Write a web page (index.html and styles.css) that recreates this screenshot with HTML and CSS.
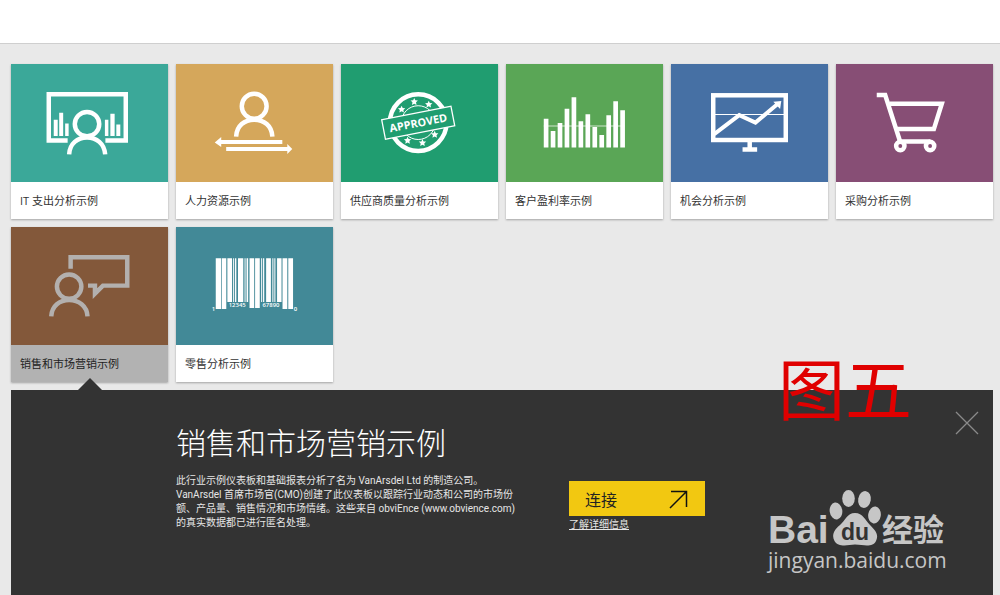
FILE: index.html
```
<!DOCTYPE html>
<html lang="zh-CN">
<head>
    <meta charset="UTF-8">
    <meta name="viewport" content="width=device-width, initial-scale=1.0">
    <title>示例</title>
    <link rel="stylesheet" href="styles.css">
</head>
<body>
    <header class="topbar"></header>
    <main class="content">
        <div class="tiles">
            <button type="button" class="tile">
                <svg class="tile-icon teal" viewBox="0 0 158 119" fill="none" stroke="#fff" stroke-width="4.5">
                    <path d="M57 77H38V30.5H115.500V77H95"/>
                    <g fill="#fff" stroke="none">
                        <path d="M43 56h4v16.500h-4zM48.500 49h4v23.500h-4zM54.500 60h3.500v12.500h-3.500zM94.500 56h3.500v16.500h-3.500zM100 50h4.300v22.500h-4.300zM106 61h4v11.500h-4z"/>
                    </g>
                    <circle cx="76.500" cy="60.500" r="15" stroke="#3ba899" stroke-width="4"/>
                    <circle cx="76.500" cy="60.500" r="12.300"/>
                    <path d="M58.500 91C59 80 67 74 76.500 74S94 80 94.800 91"/>
                </svg>
                <span class="tile-label">IT 支出分析示例</span>
            </button>
            <button type="button" class="tile">
                <svg class="tile-icon gold" viewBox="0 0 158 119" fill="none" stroke="#fff" stroke-width="4.5">
                    <circle cx="78.700" cy="42.500" r="12.500"/>
                    <path d="M60.500 73C61 62 69 56 78.700 56S96.500 62 97 73"/>
                    <g fill="#fff" stroke="none">
                        <path d="M39 79l6.500-5.500v3h61.500v4H45.500v3zM117 85.500l-5-5v3H50.500v4H112v3z"/>
                    </g>
                </svg>
                <span class="tile-label">人力资源示例</span>
            </button>
            <button type="button" class="tile">
                <svg class="tile-icon green" viewBox="0 0 158 119" fill="none" stroke="#fff">
                    <defs>
                        <path id="star" d="M0-3.800L1.100-1.400L3.700-1.200L1.800.6L2.300 3.200L0 1.900L-2.300 3.200L-1.800.6L-3.700-1.200L-1.100-1.400Z"/>
                    </defs>
                    <circle cx="77.700" cy="59" r="28.500" stroke-width="4.500"/>
                    <circle cx="77.700" cy="59" r="17"/>
                    <g fill="#fff" stroke="none">
                        <use href="#star" x="73.700" y="38"/>
                        <use href="#star" x="88.300" y="40.700"/>
                        <use href="#star" x="61" y="45.700"/>
                        <use href="#star" x="67" y="77"/>
                        <use href="#star" x="82" y="79.300"/>
                        <use href="#star" x="94.300" y="71"/>
                    </g>
                    <g transform="translate(77.700 59.200) rotate(-11)">
                        <rect x="-35.500" y="-10" width="71" height="20" fill="#209d70" stroke-width="1.300"/>
                        <text class="stamp" x="0" y="4" fill="#fff" stroke="none" text-anchor="middle">APPROVED</text>
                    </g>
                </svg>
                <span class="tile-label">供应商质量分析示例</span>
            </button>
            <button type="button" class="tile">
                <svg class="tile-icon lime" viewBox="0 0 158 119" fill="#fff">
                    <path d="M38 55h4.700v29H38zM45 67.500h4.700V84H45zM52 59.500h4.700V84H52zM59 45h4.700v39H59zM66 33.500h4.700V84H66zM73 57.500h4.700V84H73zM80 50.500h4.700V84H80zM87 63.500h4.700V84H87zM94 71.500h4.700V84H94zM101 51.500h4.700V84H101zM108 37.500h4.700V84H108zM115 46.500h4.700V84H115z"/>
                    <path d="M38 61.800h81.500v1.200H38z" fill-opacity="0.7"/>
                </svg>
                <span class="tile-label">客户盈利率示例</span>
            </button>
            <button type="button" class="tile">
                <svg class="tile-icon blue" viewBox="0 0 158 119" fill="none" stroke="#fff" stroke-width="4.5">
                    <rect x="42.500" y="31.500" width="73" height="45"/>
                    <path d="M44 50.800h72" stroke-width="1.200"/>
                    <path d="M43.500 70.500L68.700 51.500L85 59L107 40.500" stroke-width="4"/>
                    <path d="M103 38l8-.8l-1.200 8z" fill="#fff" stroke="none"/>
                    <path d="M79.200 78v7M72 86h14.700"/>
                </svg>
                <span class="tile-label">机会分析示例</span>
            </button>
            <button type="button" class="tile">
                <svg class="tile-icon purple" viewBox="0 0 158 119" fill="none" stroke="#fff" stroke-width="4.5">
                    <path d="M41 31.200h8.500L64.500 78H95"/>
                    <path d="M54 40H106.500L98.500 65.500H61"/>
                    <circle cx="64.700" cy="82.500" r="4.200" fill="#874e75"/>
                    <circle cx="94.700" cy="82.500" r="4.200" fill="#874e75"/>
                </svg>
                <span class="tile-label">采购分析示例</span>
            </button>
            <button type="button" class="tile selected">
                <svg class="tile-icon brown" viewBox="0 0 158 119" fill="none" stroke="#b3b0ae" stroke-width="4.5">
                    <circle cx="58.500" cy="60" r="12.300"/>
                    <path d="M40.500 90C41 79.500 49 73.500 58.500 73.500S76.500 79.500 77 90"/>
                    <path d="M60 42V30.500H117V59H92.500L84.500 67V59H77.500"/>
                </svg>
                <span class="tile-label">销售和市场营销示例</span>
            </button>
            <button type="button" class="tile">
                <svg class="tile-icon cyan" viewBox="0 0 158 119" fill="#fff">
                    <path d="M40 31.500h5.300v51H40zM46 31.500h4.600v51H46zM51.700 31.500h4.700V75.500h-4.700zM57.500 31.500h1v44h-1zM59.400 31.500h1.300v44h-1.300zM62.400 31.500h5.300v44h-5.300zM69 31.500h1v44h-1zM71 31.500h1.600v44H71zM74 31.500h4.700v50H74zM79.600 31.500h4.700v50h-4.700zM85.700 31.500h1v44h-1zM87.600 31.500h1.200v44h-1.200zM90.700 31.500h4.800v44h-4.800zM97 31.500h1v44h-1zM99 31.500h1v44h-1zM101.700 31.500h4.500v44h-4.500zM107.200 31.500h4.800v51h-4.800zM113 31.500h4.800v51H113z"/>
                    <g class="digits">
                        <text x="36" y="84.500">1</text>
                        <text x="53" y="81">12345</text>
                        <text x="87" y="81">67890</text>
                        <text x="118.500" y="84.500">0</text>
                    </g>
                </svg>
                <span class="tile-label">零售分析示例</span>
            </button>
        </div>

        <section class="detail">
            <div class="detail-text">
                <h2>销售和市场营销示例</h2>
                <p>此行业示例仪表板和基础报表分析了名为 VanArsdel Ltd 的制造公司。<br>VanArsdel 首席市场官(CMO)创建了此仪表板以跟踪行业动态和公司的市场份<br>额、产品量、销售情况和市场情绪。这些来自 obviEnce (www.obvience.com)<br>的真实数据都已进行匿名处理。</p>
            </div>
            <div class="detail-actions">
                <button type="button" class="connect">
                    连接
                    <svg width="20" height="20" viewBox="0 0 20 20" fill="none" stroke="#111" stroke-width="1.5">
                        <path d="M2 2.500H17.500V18M17.500 2.500L1 19"/>
                    </svg>
                </button>
                <a href="#" class="more">了解详细信息</a>
            </div>
            <button type="button" class="close" aria-label="关闭">
                <svg width="24" height="24" viewBox="0 0 24 24" stroke="#8a8a8a" stroke-width="1.300">
                    <path d="M1 1L23 23M23 1L1 23"/>
                </svg>
            </button>
        </section>
    </main>

    <div class="figure-mark">图五</div>
    <svg class="watermark" width="184" height="92" viewBox="0 0 184 92" fill="#c6c6c6">
        <text class="wm-bai" x="2" y="57">Bai</text>
        <ellipse cx="70" cy="25" rx="6.300" ry="8.500" transform="rotate(-8 70 25)"/>
        <ellipse cx="82.500" cy="12.500" rx="6.300" ry="8.500"/>
        <ellipse cx="98.500" cy="13.500" rx="6.300" ry="8.500" transform="rotate(10 98.500 13.500)"/>
        <ellipse cx="108.500" cy="29" rx="6.300" ry="8.500" transform="rotate(8 108.500 29)"/>
        <path d="M89 27C97 27 99 34 104 39C110 45 113 49 110 55C107 61 100 59.500 89 58.500C80 59.500 72 61 68.500 55C65 48 69 43 74 39C79 35 81 27 89 27Z"/>
        <text class="wm-du" x="75" y="54" fill="#333">du</text>
        <text class="wm-cn" x="116" y="55">经验</text>
        <text class="wm-url" x="2" y="82">jingyan.baidu.com</text>
    </svg>
</body>
</html>
```
FILE: styles.css
```
* {
    box-sizing: border-box;
}
body {
    margin: 0;
    min-height: 100vh;
    display: flex;
    flex-direction: column;
    position: relative;
    background: #e9e9e9;
    font-family: "Open Sans", "Noto Sans CJK SC", sans-serif;
    color: #333;
}
button {
    font-family: inherit;
    border: none;
    padding: 0;
    cursor: pointer;
}
.topbar {
    height: 44px;
    background: #fff;
    border-bottom: 1px solid #cfcfcf;
}
.content {
    flex: 1;
    display: flex;
    flex-direction: column;
    padding: 20px 7px 0 11px;
}
.tiles {
    display: grid;
    grid-template-columns: repeat(6, 1fr);
    gap: 8px;
}
.tile {
    display: flex;
    flex-direction: column;
    background: #fff;
    text-align: left;
    box-shadow: 0 1px 2px rgba(0, 0, 0, 0.3);
}
.tile-icon {
    display: block;
    width: 100%;
}
.tile-label {
    padding: 0 9px;
    font-size: 11px;
    line-height: 37px;
    color: #333;
}
.selected {
    background: #b2b2b2;
}
.selected .tile-label {
    color: #222;
}
.teal { background: #3ba899; }
.gold { background: #d5a75b; }
.green { background: #209d70; }
.lime { background: #5aa656; }
.blue { background: #4670a4; }
.purple { background: #874e75; }
.brown { background: #83583a; }
.cyan { background: #428997; }
.stamp {
    font-size: 11px;
    font-weight: bold;
}
.digits {
    font-size: 6px;
    font-weight: 600;
}

.detail {
    flex: 1;
    position: relative;
    display: flex;
    gap: 57px;
    margin-top: 8px;
    padding: 34px 60px 34px 165px;
    background: #333;
    color: #e6e6e6;
}
/* pointer to the selected tile */
.detail::before {
    content: "";
    position: absolute;
    left: 67px;
    bottom: 100%;
    border: 12px solid transparent;
    border-top: none;
    border-bottom-color: #333;
}
.detail-text {
    flex: 0 0 336px;
    min-width: 0;
}
.detail h2 {
    margin: 0 0 12px;
    font-size: 30px;
    font-weight: 300;
    line-height: 38px;
    color: #fff;
}
.detail p {
    margin: 0;
    font-family: Roboto, "Noto Sans CJK SC", sans-serif;
    font-size: 10px;
    line-height: 14px;
    white-space: nowrap;
}
.detail-actions {
    display: flex;
    flex-direction: column;
    align-items: flex-start;
    padding-top: 57px;
}
.connect {
    display: flex;
    align-items: center;
    justify-content: space-between;
    width: 136px;
    height: 35px;
    padding: 0 16px;
    background: #f2c811;
    color: #222;
    font-size: 16px;
}
.more {
    margin-top: 1px;
    font-size: 10px;
    line-height: 14px;
    color: #e6e6e6;
}
.close {
    position: absolute;
    top: 21px;
    right: 14px;
    background: none;
}
.close svg {
    display: block;
}

.figure-mark {
    position: absolute;
    top: 356px;
    right: 88px;
    font-size: 67px;
    line-height: 67px;
    color: #e00000;
}
.watermark {
    position: absolute;
    right: 50px;
    bottom: 17px;
}
.wm-bai {
    font: bold 39px "Liberation Sans", sans-serif;
}
.wm-du {
    font: bold 23px "Liberation Sans", sans-serif;
}
.wm-cn {
    font: bold 31px "Noto Sans CJK SC", sans-serif;
}
.wm-url {
    font-size: 21px;
}
```
